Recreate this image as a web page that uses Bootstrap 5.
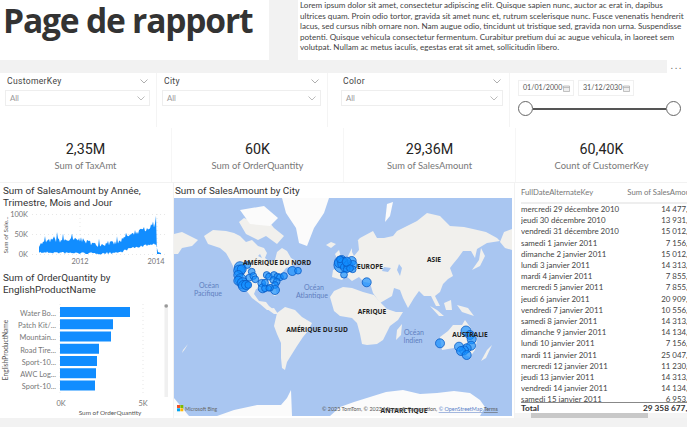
<!DOCTYPE html>
<html lang="fr">
<head>
  <meta charset="UTF-8">
  <title>Page de rapport</title>
  <link href="https://cdn.jsdelivr.net/npm/bootstrap@5.3.3/dist/css/bootstrap.min.css" rel="stylesheet">
  <style>
    html, body { height: 100%; }
    body { background: #f2f2f2; overflow: hidden; font-family: Lato, "Open Sans", sans-serif; color: #333; }
    .rpt-white { background: #fff; }
    /* top */
    .rpt-top { height: 60px; }
    .rpt-title { width: 269px; }
    .rpt-title h1 { font: 700 33.6px/1 "Open Sans", sans-serif; letter-spacing: -1.2px; color: #333; margin: 0; padding: 4px 0 0 3px; white-space: nowrap; }
    .rpt-lorem { margin-left: 29px; flex: 1; padding: 0 0 0 2px; font-size: 8.1px; line-height: 10.6px; white-space: nowrap; color: #444; overflow: hidden; }
    .rpt-band { height: 13px; }
    .rpt-dots { width: 20px; background: #fff; font-size: 9px; line-height: 9px; padding-top: 1px; letter-spacing: 2px; text-align: center; color: #666; }
    /* slicers */
    .rpt-slicers { height: 54px; }
    .rpt-slicer { padding: 3px 6px 0 5px; border-right: 1px solid #f4f4f4; }
    .rpt-s1 { width: 157px; }
    .rpt-s2 { width: 171px; }
    .rpt-s3 { width: 182px; padding-left: 13px; padding-right: 6px; }
    .rpt-s4 { flex: 1; border: 0; padding: 7px 6px 0 8px; }
    .rpt-label { font: 400 8.6px/11px Roboto, sans-serif; letter-spacing: .3px; color: #444; padding: 0 2px; }
    .rpt-drop { height: 16px; margin-top: 3px; border: 1px solid #eee; font-size: 7.8px; line-height: 14px; color: #999; padding: 0 4px; }
    .rpt-date { height: 16px; border: 1px solid #f0f0f0; font-size: 7.1px; line-height: 14px; color: #555; padding: 0 3px 0 4px; width: 56px; white-space: nowrap; }
    .rpt-date svg { flex: none; }
    .rpt-slider { height: 15px; margin-top: 5px; }
    .rpt-knob { width: 15px; height: 15px; border: 1px solid #666; border-radius: 50%; background: #fff; flex: none; }
    .rpt-rail { height: 2px; flex: 1; background: #555; }
    /* kpi */
    .rpt-kpis { height: 55px; border-top: 1px solid #fff; }
    .rpt-kpi { width: 172px; border-right: 1px solid #f6f6f6; padding-top: 13px; text-align: center; }
    .rpt-kpi:last-child { border: 0; flex: 1; }
    .rpt-value { font: 400 14.3px/17px Roboto, sans-serif; color: #252423; }
    .rpt-name { font-size: 9.4px; line-height: 14px; margin-top: 1px; color: #777; }
    /* body */
    .rpt-body { height: 235px; margin-top: 1px; gap: 1px; }
    .rpt-left { width: 173px; }
    .rpt-map { width: 340px; }
    .rpt-grid { flex: 1; min-width: 0; overflow: hidden; }
    .rpt-vt { font: 400 9.9px/11.6px Roboto, sans-serif; color: #333; padding: 2px 0 0 3px; white-space: nowrap; }
    .rpt-map .rpt-vt { padding-left: 1px; height: 15px; }
    .rpt-map svg, .rpt-left svg { display: block; }
    .rpt-chart1 { margin-top: 1px; }
    .rpt-chart2 { margin-top: 9px; }
    .rpt-t { font-family: Lato, sans-serif; }
    .rpt-u { font-family: "Open Sans", sans-serif; }
    /* table */
    .rpt-scroll { width: 176px; margin-left: 6px; }
    .rpt-table { width: 176px; margin: 0; table-layout: fixed; font-size: 7.9px; color: #444; }
    .rpt-table th, .rpt-table td { padding: 0; border: 0; white-space: nowrap; overflow: hidden; background: transparent; color: #444; }
    .rpt-table td { height: 11.2px; line-height: 11.2px; }
    .rpt-table td:last-child, .rpt-table th:last-child { text-align: right; }
    .rpt-table thead th { font-weight: 400; font-size: 7.7px; height: 20px; padding-bottom: 3px; color: #777; border-bottom: 2px solid #eee; }
    .rpt-clip { height: 198px; overflow: hidden; }
    .rpt-total { font-size: 8.3px; font-weight: 700; line-height: 10px; border-top: 1px solid #888; color: #333; }
    .rpt-hbar { height: 6px; background: #f4f4f4; }
    .rpt-hbar div { width: 117px; height: 6px; margin-left: 16px; background: #c8c8c8; }
  </style>
</head>
<body>

  <!-- Title and text -->
  <div class="d-flex rpt-top">
    <div class="rpt-title rpt-white"><h1>Page de rapport</h1></div>
    <div class="rpt-lorem rpt-white">
      Lorem ipsum dolor sit amet, consectetur adipiscing elit. Quisque sapien nunc, auctor ac erat in, dapibus<br>
      ultrices quam. Proin odio tortor, gravida sit amet nunc et, rutrum scelerisque nunc. Fusce venenatis hendrerit<br>
      lacus, sed cursus nibh ornare non. Nam augue odio, tincidunt ut tristique sed, gravida non urna. Suspendisse<br>
      potenti. Quisque vehicula consectetur fermentum. Curabitur pretium dui ac augue vehicula, in laoreet sem<br>
      volutpat. Nullam ac metus iaculis, egestas erat sit amet, sollicitudin libero.
    </div>
  </div>
  <div class="d-flex justify-content-end rpt-band"><div class="rpt-dots">...</div></div>

  <!-- Slicers -->
  <div class="d-flex rpt-slicers rpt-white">
    <div class="rpt-slicer rpt-s1">
      <div class="d-flex justify-content-between align-items-center rpt-label">CustomerKey <svg width="8" height="5" viewBox="0 0 8 5"><path d="M.5.5 4 4 7.500.5" fill="none" stroke="#999" stroke-width=".8"/></svg></div>
      <div class="d-flex justify-content-between align-items-center rpt-drop">All <svg width="8" height="5" viewBox="0 0 8 5"><path d="M.5.5 4 4 7.500.5" fill="none" stroke="#aaa" stroke-width=".8"/></svg></div>
    </div>
    <div class="rpt-slicer rpt-s2">
      <div class="d-flex justify-content-between align-items-center rpt-label">City <svg width="8" height="5" viewBox="0 0 8 5"><path d="M.5.5 4 4 7.500.5" fill="none" stroke="#999" stroke-width=".8"/></svg></div>
      <div class="d-flex justify-content-between align-items-center rpt-drop">All <svg width="8" height="5" viewBox="0 0 8 5"><path d="M.5.5 4 4 7.500.5" fill="none" stroke="#aaa" stroke-width=".8"/></svg></div>
    </div>
    <div class="rpt-slicer rpt-s3">
      <div class="d-flex justify-content-between align-items-center rpt-label">Color <svg width="8" height="5" viewBox="0 0 8 5"><path d="M.5.5 4 4 7.500.5" fill="none" stroke="#999" stroke-width=".8"/></svg></div>
      <div class="d-flex justify-content-between align-items-center rpt-drop">All <svg width="8" height="5" viewBox="0 0 8 5"><path d="M.5.5 4 4 7.500.5" fill="none" stroke="#aaa" stroke-width=".8"/></svg></div>
    </div>
    <div class="rpt-slicer rpt-s4">
      <div class="d-flex gap-1">
        <div class="d-flex justify-content-between align-items-center rpt-date">01/01/2000 <svg width="7" height="7" viewBox="0 0 7 7"><path d="M.5 1h6v5.500h-6zM.5 2.500h6" fill="#eee" stroke="#aaa" stroke-width=".7"/></svg></div>
        <div class="d-flex justify-content-between align-items-center rpt-date">31/12/2030 <svg width="7" height="7" viewBox="0 0 7 7"><path d="M.5 1h6v5.500h-6zM.5 2.500h6" fill="#eee" stroke="#aaa" stroke-width=".7"/></svg></div>
      </div>
      <div class="d-flex align-items-center rpt-slider"><div class="rpt-knob"></div><div class="rpt-rail"></div><div class="rpt-knob"></div></div>
    </div>
  </div>

  <!-- KPI cards -->
  <div class="d-flex rpt-kpis rpt-white">
    <div class="rpt-kpi"><div class="rpt-value">2,35M</div><div class="rpt-name">Sum of TaxAmt</div></div>
    <div class="rpt-kpi"><div class="rpt-value">60K</div><div class="rpt-name">Sum of OrderQuantity</div></div>
    <div class="rpt-kpi"><div class="rpt-value">29,36M</div><div class="rpt-name">Sum of SalesAmount</div></div>
    <div class="rpt-kpi"><div class="rpt-value">60,40K</div><div class="rpt-name">Count of CustomerKey</div></div>
  </div>

  <!-- Visuals -->
  <div class="d-flex rpt-body">
    <div class="rpt-left rpt-white">
      <div class="rpt-vt">Sum of SalesAmount by Année,<br>Trimestre, Mois and Jour</div>
      <svg class="rpt-chart1" width="173" height="63" viewBox="0 0 173 63">
        <g stroke="#ddd" stroke-width=".7" stroke-dasharray="1 3">
          <path d="M32 5.500h134M32 25.500h134M32 45.500h134M80 5v40M157 5v40"/>
        </g>
        <path id="salesArea" fill="#118dff"/>
        <g class="rpt-t" font-size="7.400" fill="#777">
          <text x="28" y="8" text-anchor="end">100K</text>
          <text x="28" y="28" text-anchor="end">50K</text>
          <text x="28" y="48" text-anchor="end">0K</text>
          <text x="80" y="55" text-anchor="middle">2012</text>
          <text x="156" y="55" text-anchor="middle">2014</text>
          <text transform="translate(8 26) rotate(-90)" text-anchor="middle" font-size="6.400" fill="#555">Sum of Sale...</text>
        </g>
      </svg>
      <div class="rpt-vt pt-0">Sum of OrderQuantity by<br>EnglishProductName</div>
      <svg id="barChart" class="rpt-chart2" width="173" height="113" viewBox="0 0 173 113">
        <path d="M60 0v89M143 0v89" stroke="#ddd" stroke-width=".7" stroke-dasharray="1 3"/>
        <rect x="164.500" y="0" width="3.500" height="93" fill="#f0f0f0"/>
        <circle cx="166.200" cy="2" r="1.800" fill="#999"/>
        <g class="rpt-t" font-size="7.400" fill="#777" text-anchor="end">
          <text x="56" y="11.500">Water Bo...</text>
          <text x="56" y="23.800">Patch Kit/...</text>
          <text x="56" y="36">Mountain...</text>
          <text x="56" y="48.500">Road Tire...</text>
          <text x="56" y="60.700">Sport-10...</text>
          <text x="56" y="72.900">AWC Log...</text>
          <text x="56" y="85.200">Sport-10...</text>
          <text x="61" y="102" text-anchor="middle">0K</text>
          <text x="143" y="102" text-anchor="middle">5K</text>
          <text x="110" y="111" text-anchor="middle" font-size="6.400" fill="#555">Sum of OrderQuantity</text>
          <text transform="translate(8 46) rotate(-90)" text-anchor="middle" font-size="6.600" fill="#555">EnglishProductName</text>
        </g>
      </svg>
    </div>

    <div class="rpt-map rpt-white">
      <div class="rpt-vt">Sum of SalesAmount by City</div>
      <svg id="mapSvg" width="338" height="218" viewBox="0 0 338 218">
        <rect width="338" height="218" fill="#a9c6f1"/>
        <g fill="#f1f0ed">
          <!-- North America -->
          <path d="M30 38 39 32 52 33 60 35 66 38 72 44 78 42 84 48 90 50 93 55 91 60 96 64 101 62 103 54 108 50 113 53 117 60 122 63 118 68 112 70 108 75 104 82 101 88 103 97 100 98 96 91 88 90 82 91 80 96 85 103 92 104 95 108 100 112 93 112 86 106 78 100 72 92 66 84 62 74 56 62 52 55 46 50 40 48 34 46Z"/>
          <!-- Central America tip -->
          <path d="M93 111 100 110 104 116 100 116Z"/>
          <!-- South America -->
          <path d="M103 115 111 109 121 112 128 119 138 125 134 133 129 139 123 148 118 156 113 164 111 172 108 170 107 160 107 145 103 136 100 128Z"/>
          <!-- Eurasia -->
          <path d="M158 79 159 72 164 70 170 66 176 62 174 58 180 46 186 40 199 33 203 40 210 40 219 38 223 33 233 28 243 23 253 15 266 18 276 28 290 29 299 31 312 34 323 40 326 43 313 45 308 48 303 51 301 60 297 53 289 53 284 60 279 66 276 70 279 78 274 81 269 86 266 94 261 98 266 108 262 108 257 98 250 98 245 93 240 100 234 110 229 100 226 92 220 90 218 98 206 105 199 95 196 85 190 84 185 79 178 83 172 78 168 82Z"/>
          <!-- Siberia tip on the left edge -->
          <path d="M0 36 8 34 24 42 18 48 8 50 4 56 0 56Z"/>
          <!-- Alaska end on the right edge -->
          <path d="M338 31 330 34 326 44 331 50 338 52Z"/>
          <!-- Africa -->
          <path d="M156 99 160 93 169 89 178 90 189 94 200 97 206 104 213 111 222 114 229 114 224 122 216 128 212 136 209 142 203 146 193 147 188 146 186 136 183 125 178 120 166 118 160 113Z"/>
          <!-- Australia -->
          <path d="M266 139 274 133 279 127 288 127 291 122 296 129 303 142 301 152 296 159 286 155 280 150 268 152Z"/>
          <!-- Islands -->
          <path d="M223 132 228 126 227 137 222 142Z"/>
          <path d="M256 108 263 112 270 118 265 118ZM270 105 277 102 278 112 272 112ZM283 107 294 110 300 118 288 114Z"/>
          <path d="M307 50 311 58 306 68 298 72 305 62Z"/>
          <path d="M152 47 157 44 162 46 157 50Z"/>
          <path d="M161 56 165 52 167 59 164 63Z"/>
          <path d="M313 152 318 147 312 160 307 163Z"/>
          <path d="M9 152 14 146 11 151 8 155Z"/>
          <path d="M65 24 70 20 80 24 92 20 100 30 110 38 103 46 92 38 84 42 72 36Z"/>
        </g>
        <g fill="#a9c6f1">
          <!-- Inland seas -->
          <path d="M210 69 217 70 214 74 208 73ZM225 66 228 70 226 78 223 72ZM178 46 184 42 185 52 180 58 178 54ZM86 56 88 60 84 58Z"/>
        </g>
        <g fill="#fbfbfb">
          <!-- Greenland and the Arctic -->
          <path d="M108 0H155L150 15 140 30 133 48 125 45 122 30 112 15Z"/>
          <path d="M66 12 90 8 104 20 96 28 76 26Z"/>
          <path d="M156 218 166 209 180 204 196 199 212 194 229 192 246 196 263 195 280 193 296 195 306 202 311 209 306 218Z"/>
          <path d="M43 218 60 212 83 207 107 207 113 200 117 192 118 218Z"/>
          <path d="M0 200 15 218H0Z"/>
          <path d="M213 6 219 4 216 18 211 24Z"/>
        </g>
        <g id="bubbles" fill="#118dff" fill-opacity=".68" stroke="#0a5cc4" stroke-width=".8"></g>
        <g class="rpt-u" font-size="6.600" font-weight="700" fill="#222" text-anchor="middle">
          <text x="103" y="67">AMÉRIQUE DU NORD</text>
          <text x="196" y="71">EUROPE</text>
          <text x="260" y="64">ASIE</text>
          <text x="198" y="116">AFRIQUE</text>
          <text x="143" y="134">AMÉRIQUE DU SUD</text>
          <text x="296" y="139">AUSTRALIE</text>
          <text x="230" y="215">ANTARCTIQUE</text>
        </g>
        <g class="rpt-t" font-size="7" fill="#5f7fc0" text-anchor="middle">
          <text x="35" y="90">Océan</text><text x="34" y="98">Pacifique</text>
          <text x="140" y="92">Océan</text><text x="138" y="100">Atlantique</text>
          <text x="240" y="137">Océan</text><text x="239" y="145">Indien</text>
        </g>
        <!-- Bing logo -->
        <rect x="3" y="207" width="3" height="3" fill="#f25022"/><rect x="6.300" y="207" width="3" height="3" fill="#7fba00"/>
        <rect x="3" y="210.300" width="3" height="3" fill="#00a4ef"/><rect x="6.300" y="210.300" width="3" height="3" fill="#ffb900"/>
        <text class="rpt-t" x="11" y="212.500" font-size="5" fill="#666">Microsoft Bing</text>
        <text class="rpt-t" x="148" y="213" font-size="5.400" fill="#555">© 2023 TomTom, © 2023 Microsoft Corporation, <tspan fill="#5a7fc8" text-decoration="underline">© OpenStreetMap</tspan> <tspan text-decoration="underline">Terms</tspan></text>
      </svg>
    </div>

    <div class="rpt-grid rpt-white">
      <div class="rpt-scroll">
        <table class="table rpt-table">
          <colgroup><col style="width:100px"><col></colgroup>
          <thead><tr><th>FullDateAlternateKey</th><th>Sum of SalesAmount</th></tr></thead>
        </table>
        <div class="rpt-clip">
          <table class="table rpt-table"><colgroup><col style="width:115px"><col></colgroup><tbody id="rows"></tbody></table>
        </div>
        <div class="d-flex justify-content-between rpt-total"><span>Total</span><span>29 358 677,29</span></div>
      </div>
      <div class="rpt-hbar"><div></div></div>
    </div>
  </div>

  <script src="https://cdn.jsdelivr.net/npm/bootstrap@5.3.3/dist/js/bootstrap.bundle.min.js"></script>
  <script>
    const rows = [
      ['mercredi 29 décembre 2010', '14 477,34'], ['jeudi 30 décembre 2010', '13 931,52'],
      ['vendredi 31 décembre 2010', '15 012,18'], ['samedi 1 janvier 2011', '7 156,54'],
      ['dimanche 2 janvier 2011', '15 012,18'], ['lundi 3 janvier 2011', '14 313,08'],
      ['mardi 4 janvier 2011', '7 855,64'], ['mercredi 5 janvier 2011', '7 855,64'],
      ['jeudi 6 janvier 2011', '20 909,78'], ['vendredi 7 janvier 2011', '10 556,53'],
      ['samedi 8 janvier 2011', '14 313,08'], ['dimanche 9 janvier 2011', '14 134,80'],
      ['lundi 10 janvier 2011', '7 156,54'], ['mardi 11 janvier 2011', '25 047,12'],
      ['mercredi 12 janvier 2011', '11 230,63'], ['jeudi 13 janvier 2011', '14 313,08'],
      ['vendredi 14 janvier 2011', '14 134,80'], ['samedi 15 janvier 2011', '6 953,26']
    ];
    document.getElementById('rows').innerHTML = rows.map(r => `<tr><td>${r[0]}</td><td>${r[1]}</td></tr>`).join('');

    // Bars of the product chart
    const bars = [70, 53, 51, 39, 37, 36, 35];
    let barHtml = '';
    bars.forEach((w, i) => { barHtml += `<rect x="60" y="${3 + i * 12.25}" width="${w}" height="10" fill="#118dff"/>`; });
    document.getElementById('barChart').insertAdjacentHTML('beforeend', barHtml);

    // Sales series: jagged band between a low and a high envelope
    let seed = 7;
    const rnd = () => (seed = (seed * 16807) % 2147483647) / 2147483647;
    const lerp = (pts, x) => {
      for (let i = 1; i < pts.length; i++) {
        if (x <= pts[i][0]) {
          const t = (x - pts[i - 1][0]) / (pts[i][0] - pts[i - 1][0]);
          return pts[i - 1][1] + t * (pts[i][1] - pts[i - 1][1]);
        }
      }
      return pts[pts.length - 1][1];
    };
    const hi = [[39, 24], [50, 34], [80, 36], [95, 24], [118, 28], [128, 45], [145, 62], [157, 75]];
    const lo = [[39, 8], [100, 5], [120, 8], [130, 18], [157, 30]];
    const yOf = v => 45.5 - v * 0.4;
    let upper = '', lower = '';
    for (let x = 39; x <= 156; x += 1) {
      let h = lerp(hi, x) + rnd() * 12 - 5;
      if (x % 9 === 0) h += 12;
      if (x === 57) h = 56;
      if (x === 156) h = 97;
      const l = lerp(lo, x) - rnd() * 5;
      upper += `${x},${yOf(h).toFixed(1)} `;
      lower = `${x},${yOf(l).toFixed(1)} ` + lower;
    }
    document.getElementById('salesArea').setAttribute('d', 'M' + upper.trim().replace(/ /g, 'L') + 'L157,45L161,45L161,44L158,43L' + lower.trim().replace(/ /g, 'L') + 'Z');

    // City bubbles, x and y read off the map
    const cities = [
      [210,262,5],[208,272,5],[215,268,4],[205,285,4],[212,298,5],[205,302,4],[218,310,5],[222,318,5],[228,315,4],[235,315,3],
      [232,255,3],[245,275,3],[238,293,3],[250,288,3],[256,298,3],
      [275,310,3.5],[278,325,4],[285,325,3],[290,285,3],[297,290,3],[285,308,3],[312,285,3],[322,290,3],[310,300,3],[330,292,3],
      [342,288,3],[320,305,3],[315,315,3],[315,330,4],[300,323,3],[296,325,2.5],
      [367,273,4],[384,272,3],
      [515,255,7],[515,240,4],[510,247,5],[520,250,5],[525,262,4],[535,255,4],[545,243,4],[548,255,4],[548,268,3],[530,268,3],
      [522,284,3],[510,238,3],[530,245,4],[540,265,3],
      [590,307,4],
      [888,453,4.5],[810,490,4],[900,465,4],[905,478,4],[903,497,4],[890,505,4],[882,511,4],[867,500,4],[873,513,4],[890,525,4]
    ];
    document.getElementById('bubbles').innerHTML = cities
      .map(c => `<circle cx="${(c[0] / 3 - 4).toFixed(1)}" cy="${(c[1] / 3 - 18).toFixed(1)}" r="${(c[2] * 1.12).toFixed(1)}"/>`).join('');
  </script>
</body>
</html>
